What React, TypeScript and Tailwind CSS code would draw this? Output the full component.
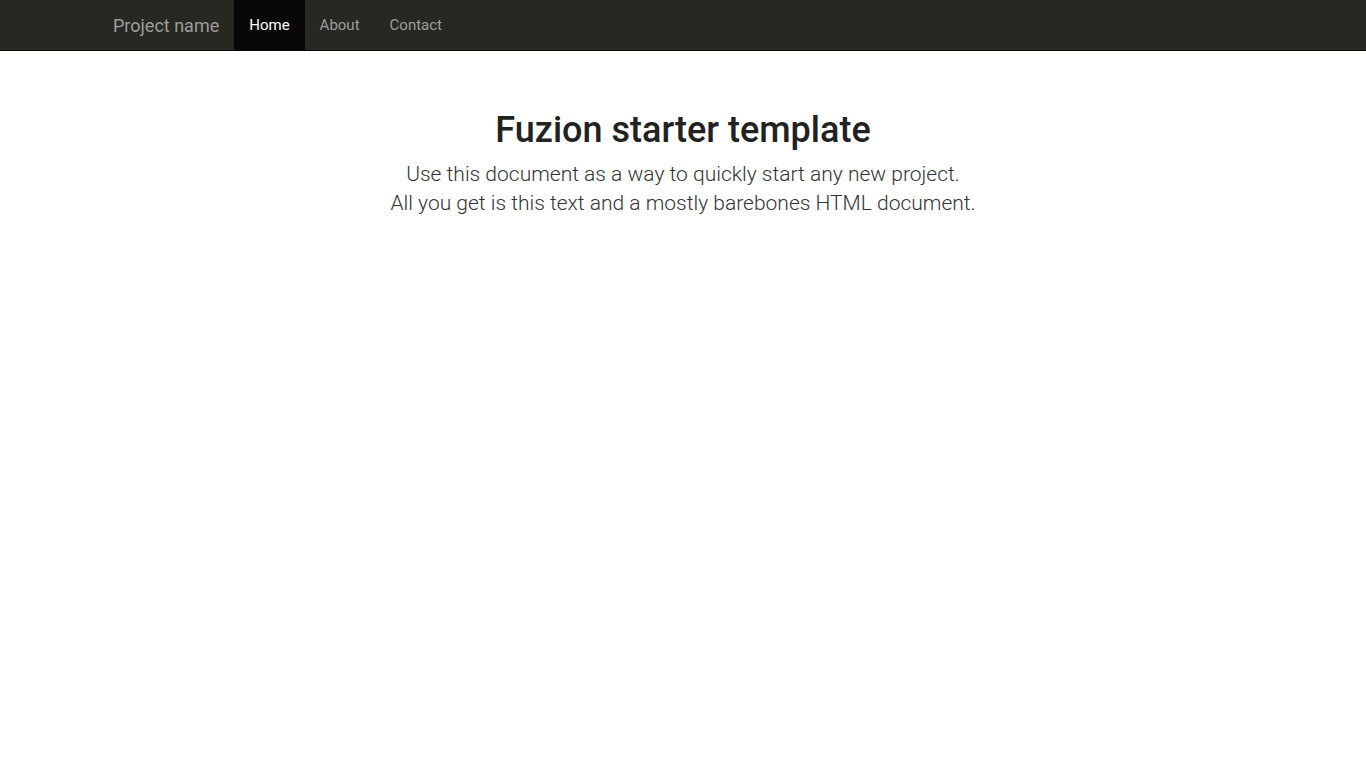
import React from "react";

export default function App() {
  return (
    <div className="min-h-[768px] bg-white" style={{ fontFamily: "Roboto, 'Liberation Sans', sans-serif" }}>
      <nav className="h-[51px] bg-[#272822] border-b border-[#080808]">
        <div className="mx-auto w-[1170px] px-[15px] flex h-[50px]">
          <a className="-ml-[15px] px-[15px] h-[50px] flex items-center text-[18px] text-[#9d9d9d]">Project name</a>
          <ul className="flex">
            <li className="h-[50px] px-[15px] flex items-center bg-[#080808] text-white text-[15px]">Home</li>
            <li className="h-[50px] px-[15px] flex items-center text-[#9d9d9d] text-[15px]">About</li>
            <li className="h-[50px] px-[15px] flex items-center text-[#9d9d9d] text-[15px]">Contact</li>
          </ul>
        </div>
      </nav>
      <div className="mx-auto w-[1170px] px-[15px]">
        <div className="px-[15px] py-[40px] text-center">
          <h1 className="mt-[20px] mb-[9px] text-[36px] leading-[1.1] font-medium text-[#222]">Fuzion starter template</h1>
          <p className="text-[21px] font-light leading-[1.4] text-[#333]">
            Use this document as a way to quickly start any new project.
            <br />
            All you get is this text and a mostly barebones HTML document.
          </p>
        </div>
      </div>
    </div>
  );
}
